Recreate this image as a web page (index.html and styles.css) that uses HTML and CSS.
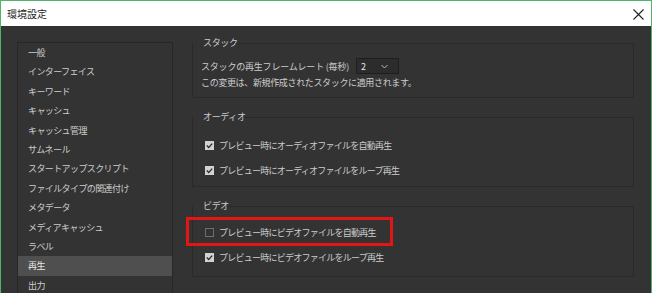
FILE: index.html
```html
<!DOCTYPE html>
<html lang="ja">
<head>
    <meta charset="UTF-8">
    <title>環境設定</title>
    <link rel="stylesheet" href="styles.css">
</head>
<body>
    <div class="window">
        <div class="titlebar">
            <span class="title">環境設定</span>
            <svg class="close" width="11" height="11" viewBox="0 0 11 11">
                <path d="M0.5 0.5 L10.5 10.5 M10.5 0.5 L0.5 10.5" stroke="#222" stroke-width="1.1" fill="none"/>
            </svg>
        </div>
        <div class="content">
            <ul class="sidebar">
                <li>一般</li>
                <li>インターフェイス</li>
                <li>キーワード</li>
                <li>キャッシュ</li>
                <li>キャッシュ管理</li>
                <li>サムネール</li>
                <li>スタートアップスクリプト</li>
                <li>ファイルタイプの関連付け</li>
                <li>メタデータ</li>
                <li>メディアキャッシュ</li>
                <li>ラベル</li>
                <li class="selected">再生</li>
                <li>出力</li>
            </ul>
            <div class="panel">
                <fieldset class="group">
                    <legend>スタック</legend>
                    <div class="row">
                        <span class="row-label">スタックの再生フレームレート (毎秒)</span>
                        <div class="select">
                            <span>2</span>
                            <svg width="7" height="5" viewBox="0 0 7 5">
                                <path d="M0.5 1 L3.5 4 L6.5 1" stroke="#bbb" stroke-width="1" fill="none"/>
                            </svg>
                        </div>
                    </div>
                    <p class="note">この変更は、新規作成されたスタックに適用されます。</p>
                </fieldset>

                <fieldset class="group audio">
                    <legend>オーディオ</legend>
                    <label class="check">
                        <span class="box checked"><svg width="9" height="9" viewBox="0 0 9 9"><path d="M1.8 4.6 L3.7 6.4 L7.2 2.6" stroke="#2e2e2e" stroke-width="1.4" fill="none"/></svg></span>
                        プレビュー時にオーディオファイルを自動再生
                    </label>
                    <label class="check">
                        <span class="box checked"><svg width="9" height="9" viewBox="0 0 9 9"><path d="M1.8 4.6 L3.7 6.4 L7.2 2.6" stroke="#2e2e2e" stroke-width="1.4" fill="none"/></svg></span>
                        プレビュー時にオーディオファイルをループ再生
                    </label>
                </fieldset>

                <fieldset class="group video">
                    <legend>ビデオ</legend>
                    <label class="check">
                        <span class="box"></span>
                        プレビュー時にビデオファイルを自動再生
                        <span class="highlight"></span>
                    </label>
                    <label class="check">
                        <span class="box checked"><svg width="9" height="9" viewBox="0 0 9 9"><path d="M1.8 4.6 L3.7 6.4 L7.2 2.6" stroke="#2e2e2e" stroke-width="1.4" fill="none"/></svg></span>
                        プレビュー時にビデオファイルをループ再生
                    </label>
                </fieldset>
            </div>
        </div>
    </div>
</body>
</html>
```

FILE: styles.css
```css
html, body {
    margin: 0;
    padding: 0;
}
body {
    width: 652px;
    height: 293px;
    overflow: hidden;
    background-color: #333333;
    font-family: "Noto Sans CJK JP", "Noto Sans", sans-serif;
    font-size: 9px;
    letter-spacing: -0.35px;
    color: #cccccc;
}
.window {
    width: 652px;
    height: 293px;
    box-sizing: border-box;
    border: 1px solid #4fb36b;
    border-bottom: none;
    display: flex;
    flex-direction: column;
}
.titlebar {
    height: 25px;
    flex: none;
    background: #ffffff;
    display: flex;
    align-items: center;
    justify-content: space-between;
    padding: 0 7px 0 6px;
}
.title {
    font-size: 10px;
    letter-spacing: 0;
    color: #1e1e1e;
}
.close {
    margin-top: 1px;
}
.content {
    flex: 1;
    display: flex;
    padding: 16px 0 0 16px;
    gap: 19px;
}
.sidebar {
    list-style: none;
    margin: 0;
    padding: 0;
    width: 154px;
    border: 1px solid #272727;
    border-bottom: none;
}
.sidebar li {
    height: 19.4px;
    line-height: 19.4px;
    padding-left: 10px;
    letter-spacing: -0.6px;
}
.sidebar li.selected {
    background: #4f4f4f;
    color: #e6e6e6;
}
.panel {
    width: 442px;
    display: flex;
    flex-direction: column;
    gap: 13px;
    margin-top: -5px;
}
.group {
    margin: 0;
    padding: 8px 8px 8px 8px;
    border: 1px solid #2a2a2a;
    min-width: 0;
}
.group legend {
    padding: 0 2px;
    line-height: 12px;
    margin-left: -8px;
    transform: translateX(8px);
}
.row {
    display: flex;
    align-items: center;
    height: 16px;
    margin-top: 1px;
}
.row-label {
    letter-spacing: -0.2px;
}
.select {
    margin-left: 7px;
    width: 43px;
    height: 16px;
    box-sizing: border-box;
    border: 1px solid #1e1e1e;
    background: #2c2c2c;
    display: flex;
    align-items: center;
    justify-content: space-between;
    padding: 0 10px 0 4px;
    color: #e8e8e8;
}
.note {
    margin: 3px 0 0 0;
    line-height: 12px;
}
.check {
    position: relative;
    display: flex;
    align-items: center;
    height: 16px;
    margin-top: 9px;
    padding-left: 4px;
    gap: 5px;
    letter-spacing: -0.75px;
}
.audio .check:first-of-type {
    margin-top: 6px;
}
.audio {
    padding-bottom: 8px;
}
.video .check:first-of-type {
    margin-top: 4px;
}
.video {
    padding-bottom: 11px;
}
.box {
    width: 9px;
    height: 9px;
    box-sizing: border-box;
    border: 1px solid #6e6e6e;
    display: flex;
}
.box.checked {
    background: #d2d2d2;
    border-color: #d2d2d2;
}
.box svg {
    margin: -1px;
}
.highlight {
    position: absolute;
    left: -15px;
    top: -7px;
    width: 207px;
    height: 29px;
    box-sizing: border-box;
    border: 3px solid #e31515;
}
```
